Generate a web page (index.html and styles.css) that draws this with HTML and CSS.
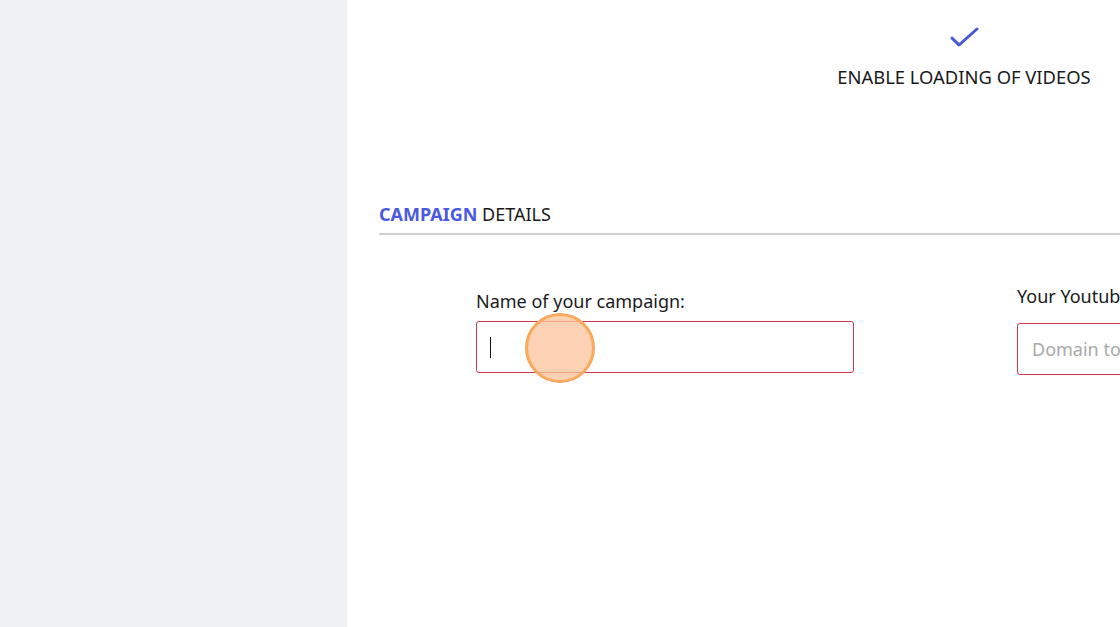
FILE: index.html
```html
<!DOCTYPE html>
<html lang="en">
<head>
    <meta charset="UTF-8">
    <meta name="viewport" content="width=device-width, initial-scale=1.0">
    <title>Campaign Details</title>
    <link rel="stylesheet" href="styles.css">
</head>
<body>
    <aside class="sidebar"></aside>

    <main class="content">
        <div class="video-toggle">
            <svg class="check" width="30" height="24" viewBox="0 0 30 24">
                <path d="M3 11 L10 18 L28 2" fill="none" stroke="#4657d9" stroke-width="3" stroke-linecap="round" stroke-linejoin="round"/>
            </svg>
            <span class="toggle-label">ENABLE LOADING OF VIDEOS</span>
        </div>

        <h2 class="section-title"><span class="accent">CAMPAIGN</span> DETAILS</h2>

        <form class="fields">
            <div class="field">
                <label for="campaignName">Name of your campaign:</label>
                <div class="input-wrap">
                    <input type="text" id="campaignName" class="invalid">
                    <span class="caret"></span>
                </div>
            </div>
            <div class="field field-second">
                <label for="channel">Your Youtube channel:</label>
                <input type="text" id="channel" class="invalid" placeholder="Domain to your channel">
            </div>
        </form>

        <!-- click indicator from the recording -->
        <span class="click-dot"></span>
    </main>
</body>
</html>
```

FILE: styles.css
```css
body {
    margin: 0;
    height: 627px;
    display: flex;
    overflow: hidden;
    font-family: "Noto Sans", Lato, sans-serif;
    line-height: 22px;
    color: #1a1a1c;
    background: #ffffff;
}

.sidebar {
    width: 347px;
    flex-shrink: 0;
    background-color: #eff2f5;
}

.content {
    flex: 1;
    position: relative;
    padding-left: 32px;
    overflow: hidden;
}

.video-toggle {
    display: flex;
    flex-direction: column;
    align-items: center;
    width: 254px;
    margin-left: auto;
    margin-right: 29px;
    padding-top: 27px;
}

.toggle-label {
    margin-top: 15px;
    font-size: 18.4px;
    white-space: nowrap;
}

.section-title {
    margin: 115px 0 0;
    padding-bottom: 8px;
    border-bottom: 2px solid #d0d0d0;
    font-size: 18px;
    font-weight: normal;
    width: 1000px;
}

.accent {
    color: #4a5ae0;
    font-weight: bold;
}

.fields {
    display: flex;
    gap: 163px;
    padding-left: 97px;
}

.field {
    display: flex;
    flex-direction: column;
    flex-shrink: 0;
    margin-top: 55px;
}

.field label {
    font-size: 18px;
    margin-bottom: 9px;
    white-space: nowrap;
}

.field-second {
    margin-top: 50px;
}

.field-second label {
    margin-bottom: 16px;
}

.input-wrap {
    position: relative;
}

input {
    box-sizing: border-box;
    width: 378px;
    height: 52px;
    padding: 0 14px;
    border: 1px solid #d0384a;
    border-radius: 3px;
    font-family: inherit;
    font-size: 18px;
    outline: none;
}

input::placeholder {
    color: #a9a9a9;
}

.caret {
    position: absolute;
    left: 14px;
    top: 16px;
    width: 1px;
    height: 21px;
    background: #111;
}

.click-dot {
    position: absolute;
    left: 178px;
    top: 313px;
    width: 64px;
    height: 64px;
    border-radius: 50%;
    background: rgba(252, 195, 155, 0.75);
    border: 3px solid #f9a85c;
}
```
